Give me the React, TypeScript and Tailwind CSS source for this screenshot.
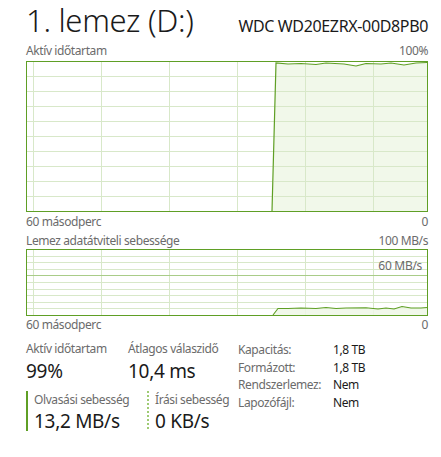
import React from "react";

const GREEN = "#5f9f25";
const GRID = "#d8e8c9";
const FILL = "#eef7e6";

function Graph1() {
  const w = 402, h = 150;
  const vx = [7, 75, 143, 211, 279, 347];
  const hy = [15, 30, 45, 60, 75, 90, 105, 120, 135];
  const top: [number, number][] = [
    [250, 2], [262, 3], [275, 2.5], [290, 3.5], [300, 2], [318, 3], [330, 5], [340, 2.5],
    [355, 3], [365, 2], [378, 4], [390, 2], [401, 1.5],
  ];
  const pts = [[246, 150] as [number, number], ...top, [401, 150] as [number, number]];
  const poly = pts.map((p) => p.join(",")).join(" ");
  const line = [[246, 150], ...top].map((p) => p.join(",")).join(" ");
  return (
    <svg width={w} height={h + 1} viewBox={`0 0 ${w} ${h + 1}`} className="block">
      {vx.map((x) => (
        <line key={x} x1={x + 0.5} y1={0} x2={x + 0.5} y2={h} stroke={GRID} strokeWidth={1} />
      ))}
      {hy.map((y) => (
        <line key={y} x1={0} y1={y + 0.5} x2={w} y2={y + 0.5} stroke={GRID} strokeWidth={1} />
      ))}
      <polygon points={poly} fill={FILL} fillOpacity={0.85} />
      {vx.filter((x) => x > 246).map((x) => (
        <line key={"o" + x} x1={x + 0.5} y1={0} x2={x + 0.5} y2={h} stroke={GRID} strokeWidth={1} />
      ))}
      {hy.map((y) => (
        <line key={"oh" + y} x1={248} y1={y + 0.5} x2={w} y2={y + 0.5} stroke={GRID} strokeWidth={1} />
      ))}
      <polyline points={line} fill="none" stroke={GREEN} strokeWidth={1.2} />
      <rect x={0.5} y={0.5} width={w - 1} height={h} fill="none" stroke={GREEN} strokeWidth={1} />
    </svg>
  );
}

function Graph2() {
  const w = 402, h = 66;
  const vx = [7, 75, 143, 211, 279, 347];
  const hy = [1, 2, 3, 4, 5, 6, 7, 8, 9].map((i) => Math.round(i * 6.6));
  const data: [number, number][] = [
    [247, 66], [252, 59.5], [262, 59.5], [275, 59], [290, 59.5], [300, 58.5], [310, 59.5],
    [320, 59], [340, 58.7], [352, 60], [360, 59], [368, 60], [376, 57.5], [385, 59], [395, 59], [401, 58.5],
  ];
  const poly = [...data, [401, 66] as [number, number]].map((p) => p.join(",")).join(" ");
  const line = data.map((p) => p.join(",")).join(" ");
  return (
    <svg width={w} height={h + 1} viewBox={`0 0 ${w} ${h + 1}`} className="block">
      {vx.map((x) => (
        <line key={x} x1={x + 0.5} y1={0} x2={x + 0.5} y2={h} stroke={GRID} strokeWidth={1} />
      ))}
      {hy.map((y, i) => (
        <line
          key={y}
          x1={0}
          y1={y + 0.5}
          x2={w}
          y2={y + 0.5}
          stroke={i === 3 ? "#a9cc88" : GRID}
          strokeWidth={1}
        />
      ))}
      <polygon points={poly} fill={FILL} fillOpacity={0.85} />
      <polyline points={line} fill="none" stroke={GREEN} strokeWidth={1.1} />
      <rect x={0.5} y={0.5} width={w - 1} height={h} fill="none" stroke={GREEN} strokeWidth={1} />
      <text
        x={396}
        y={21}
        textAnchor="end"
        fontSize={12}
        letterSpacing={-0.3}
        fill="#6b6b6b"
        fontFamily="'Noto Sans', sans-serif"
      >
        60 MB/s
      </text>
    </svg>
  );
}

function LabelRow({ left, right }: { left: string; right: string }) {
  return (
    <div className="flex justify-between text-[12px] leading-[16px] tracking-[-0.4px] text-[#6b6b6b]">
      <span>{left}</span>
      <span>{right}</span>
    </div>
  );
}

export default function App() {
  return (
    <div
      className="w-[441px] h-[457px] bg-white pl-[26px] pr-[13px] text-[#1a1a1a] overflow-hidden"
      style={{ fontFamily: "'Noto Sans', 'Open Sans', sans-serif" }}
    >
      <div className="flex justify-between items-baseline h-[42px]">
        <span className="text-[31px] leading-[40px] font-light tracking-[-0.3px]">1. lemez (D:)</span>
        <span className="text-[16px] leading-[20px] tracking-[-0.35px]">WDC WD20EZRX-00D8PB0</span>
      </div>
      <div className="h-[19px] pt-[1px]">
        <LabelRow left="Aktív időtartam" right="100%" />
      </div>
      <Graph1 />
      <div className="h-[21px] pt-[2px]">
        <LabelRow left="60 másodperc" right="0" />
      </div>
      <div className="h-[16px]">
        <LabelRow left="Lemez adatátviteli sebessége" right="100 MB/s" />
      </div>
      <Graph2 />
      <div className="h-[25px] pt-[1px]">
        <LabelRow left="60 másodperc" right="0" />
      </div>
      <div className="flex items-start">
        <div className="w-[212px] flex flex-col">
          <div className="flex">
            <div className="w-[102px] flex flex-col">
              <span className="text-[12px] leading-[16px] tracking-[-0.4px] text-[#6b6b6b]">Aktív időtartam</span>
              <span className="text-[19px] leading-[28px] tracking-[-0.3px]">99%</span>
            </div>
            <div className="flex flex-col">
              <span className="text-[12px] leading-[16px] tracking-[-0.4px] text-[#6b6b6b] whitespace-nowrap">Átlagos válaszidő</span>
              <span className="text-[19px] leading-[28px] tracking-[-0.3px] whitespace-nowrap">10,4 ms</span>
            </div>
          </div>
          <div className="flex mt-[6px]">
            <div className="w-[121px] flex">
              <div className="w-[2px] h-[40px] bg-[#5f9f25]" />
              <div className="flex flex-col pl-[6px] pt-[1px]">
                <span className="text-[12px] leading-[16px] tracking-[-0.4px] text-[#6b6b6b] whitespace-nowrap">Olvasási sebesség</span>
                <span className="text-[19px] leading-[26px] tracking-[-0.3px] whitespace-nowrap">13,2 MB/s</span>
              </div>
            </div>
            <div className="flex">
              <div className="w-[2px] h-[40px] bg-[repeating-linear-gradient(to_bottom,#9fcb74_0px,#9fcb74_2px,transparent_2px,transparent_4px)]" />
              <div className="flex flex-col pl-[6px] pt-[1px]">
                <span className="text-[12px] leading-[16px] tracking-[-0.4px] text-[#6b6b6b] whitespace-nowrap">Írási sebesség</span>
                <span className="text-[19px] leading-[26px] tracking-[-0.3px] whitespace-nowrap">0 KB/s</span>
              </div>
            </div>
          </div>
        </div>
        <div className="grid grid-cols-[95px_auto] content-start text-[12px] leading-[17.7px] tracking-[-0.4px]">
          <span className="text-[#6b6b6b]">Kapacitás:</span>
          <span>1,8 TB</span>
          <span className="text-[#6b6b6b]">Formázott:</span>
          <span>1,8 TB</span>
          <span className="text-[#6b6b6b]">Rendszerlemez:</span>
          <span>Nem</span>
          <span className="text-[#6b6b6b]">Lapozófájl:</span>
          <span>Nem</span>
        </div>
      </div>
    </div>
  );
}
